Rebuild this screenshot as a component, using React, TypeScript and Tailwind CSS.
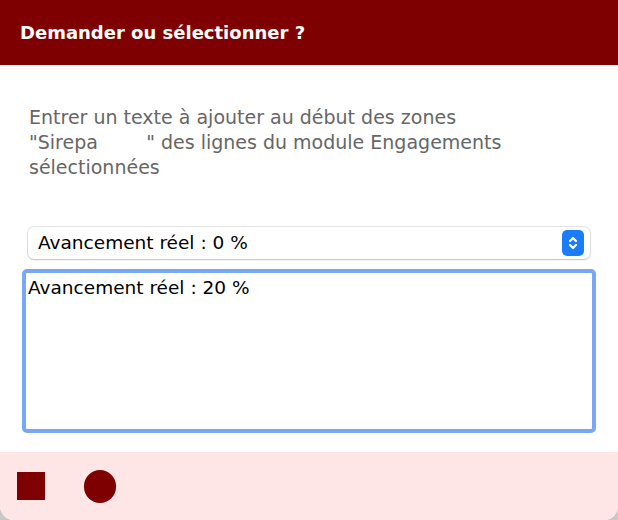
import { useState } from 'react'

const font = { fontFamily: '"DejaVu Sans", "Liberation Sans", sans-serif' }

const App = () => {
  const [value, setValue] = useState('Avancement réel : 20 %')

  return (
    <div className="w-[618px] h-[520px] bg-[#c8c8c8]" style={font}>
      <div className="flex flex-col w-full h-full bg-white rounded-b-[14px] overflow-hidden">
        <div className="h-[65px] bg-[#7f0000] flex items-center px-5">
          <h1 className="text-white font-bold text-[18px]">Demander ou sélectionner ?</h1>
        </div>

        <div className="flex-1 flex flex-col px-[22px]">
          <p className="mt-[40px] px-[7px] text-[#666666] text-[19px] leading-[25px] whitespace-nowrap">
            Entrer un texte à ajouter au début des zones
            <br />
            "Sirepa&nbsp;&nbsp;&nbsp;&nbsp;&nbsp;&nbsp;&nbsp;&nbsp;" des lignes du module Engagements
            <br />
            sélectionnées
          </p>

          <div className="mt-[47px] mx-[6px] h-[32px] flex items-center justify-between rounded-[6px] bg-white shadow-[0_0_0_1px_rgba(0,0,0,0.1),0_1px_2px_rgba(0,0,0,0.15)] pl-[10px] pr-[6px]">
            <span className="text-[18.5px] text-black">Avancement réel : 0 %</span>
            <div className="w-[22px] h-[26px] rounded-[5px] bg-[#1a7cf8] flex items-center justify-center">
              <svg width="10" height="16" viewBox="0 0 10 16" fill="none" stroke="white" strokeWidth="2.2" strokeLinecap="round" strokeLinejoin="round">
                <path d="M2 6 L5 3 L8 6" />
                <path d="M2 10 L5 13 L8 10" />
              </svg>
            </div>
          </div>

          <textarea
            value={value}
            onChange={(e) => setValue(e.target.value)}
            className="mt-[10px] h-[164px] w-full resize-none border-4 border-[#78a7f7] rounded-[5px] px-[2px] pt-[3px] pb-0 text-[18.5px] leading-[24px] text-black outline-none"
            style={font}
          />
        </div>

        <div className="h-[68px] bg-[#fee6e6] flex items-center gap-[39px] pl-[17px]">
          <div className="w-[28px] h-[28px] bg-[#7f0000]" />
          <div className="w-[32px] h-[33px] rounded-full bg-[#7f0000]" />
        </div>
      </div>
    </div>
  )
}

export default App
